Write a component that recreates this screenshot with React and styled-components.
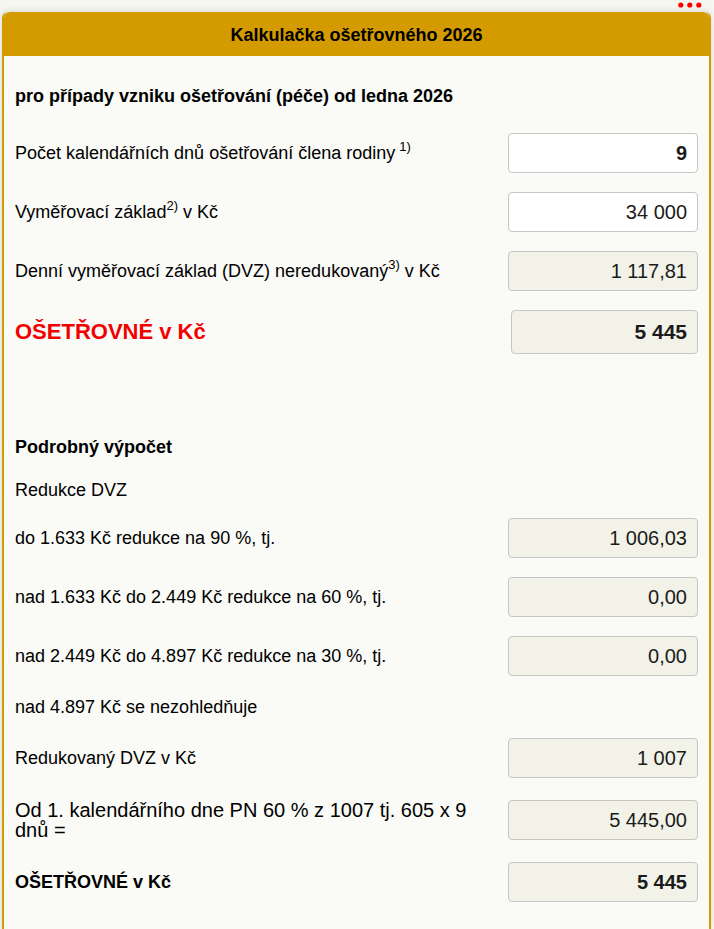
import React from 'react';
import styled, {createGlobalStyle} from 'styled-components';

const GlobalStyle = createGlobalStyle`
  html, body {
    margin: 0;
    padding: 0;
    background: #f7f7f2;
  }
  body {
    font-family: "Liberation Sans", Arial, sans-serif;
    color: #000;
  }
`;

const Page = styled.div`
  padding: 0 3px 0 2px;
`;

const TopBar = styled.div`
  display: flex;
  justify-content: flex-end;
  align-items: flex-start;
  height: 12px;
  padding: 2px 9px 0 0;
  box-sizing: border-box;
`;

const Panel = styled.div`
  border-radius: 6px 6px 0 0;
  box-shadow: 0 -1px 6px rgba(0, 0, 0, 0.12);
  background: #fafaf6;
  border-left: 2px solid #d49b00;
  border-right: 2px solid #d49b00;
  min-height: 917px;
`;

const Header = styled.div`
  height: 44px;
  background: #d49b00;
  border-radius: 6px 6px 0 0;
  display: flex;
  align-items: center;
  justify-content: center;
  font-size: 18px;
  font-weight: bold;
  padding-top: 2px;
  box-sizing: border-box;
`;

const Body = styled.div`
  padding: 28px 11px 20px 11px;
  display: flex;
  flex-direction: column;
`;

const Section = styled.div`
  display: flex;
  flex-direction: column;
  gap: ${({gap}) => gap || 19}px;
  margin-top: ${({top}) => top || 0}px;
`;

const Note = styled.div`
  height: 24px;
  line-height: 24px;
  font-size: 18px;
  font-weight: ${({bold}) => (bold ? 'bold' : 'normal')};
  margin-bottom: ${({after}) => after || 0}px;
  white-space: nowrap;
`;

const Row = styled.div`
  display: flex;
  align-items: center;
  justify-content: space-between;
  min-height: ${({h}) => h || 40}px;
`;

const Label = styled.div`
  flex: 1;
  padding-right: 20px;
  font-size: ${({size}) => size || 18}px;
  line-height: ${({lh}) => lh || 'normal'};
  font-weight: ${({bold}) => (bold ? 'bold' : 'normal')};
  color: ${({red}) => (red ? '#f20000' : '#000')};
`;

const Sup = styled.sup`
  font-size: 13px;
  vertical-align: 8px;
  line-height: 0;
  margin-left: ${({gap}) => (gap ? 4 : 0)}px;
`;

const Field = styled.input`
  box-sizing: border-box;
  width: ${({big}) => (big ? 187 : 190)}px;
  height: ${({big}) => (big ? 44 : 40)}px;
  border: 1px solid #c6c6c6;
  border-radius: 4px;
  background: ${({plain}) => (plain ? '#ffffff' : '#f2f2e8')};
  text-align: right;
  padding: 0 10px 0 6px;
  font-family: "Liberation Sans", Arial, sans-serif;
  font-size: ${({big}) => (big ? 21 : 20)}px;
  font-weight: ${({bold}) => (bold ? 'bold' : 'normal')};
  color: #1b1b1b;
  outline: none;
`;

const Dots = () => (
  <svg width="24" height="6" viewBox="0 0 24 6">
    <circle cx="2.8" cy="3" r="2.6" fill="#f00" />
    <circle cx="11.8" cy="3" r="2.6" fill="#f00" />
    <circle cx="20.8" cy="3" r="2.6" fill="#f00" />
  </svg>
);

function App() {
  return (
    <Page>
      <GlobalStyle />
      <TopBar>
        <Dots />
      </TopBar>
      <Panel>
        <Header>Kalkulačka ošetřovného 2026</Header>
        <Body>
          <Note bold after={25}>
            pro případy vzniku ošetřování (péče) od ledna 2026
          </Note>
          <Section gap={19}>
            <Row>
              <Label>
                Počet kalendářních dnů ošetřování člena rodiny
                <Sup gap>1)</Sup>
              </Label>
              <Field plain bold readOnly value="9" />
            </Row>
            <Row>
              <Label>
                Vyměřovací základ<Sup>2)</Sup> v Kč
              </Label>
              <Field plain readOnly value="34 000" />
            </Row>
            <Row>
              <Label>
                Denní vyměřovací základ (DVZ) neredukovaný<Sup>3)</Sup> v Kč
              </Label>
              <Field readOnly value="1 117,81" />
            </Row>
            <Row h={44}>
              <Label size={22} bold red>
                OŠETŘOVNÉ v Kč
              </Label>
              <Field big bold readOnly value="5 445" />
            </Row>
          </Section>
          <Section gap={19} top={81}>
            <Note bold>Podrobný výpočet</Note>
            <Note after={-3}>Redukce DVZ</Note>
            <Row>
              <Label>do 1.633 Kč redukce na 90 %, tj.</Label>
              <Field readOnly value="1 006,03" />
            </Row>
            <Row>
              <Label>nad 1.633 Kč do 2.449 Kč redukce na 60 %, tj.</Label>
              <Field readOnly value="0,00" />
            </Row>
            <Row>
              <Label>nad 2.449 Kč do 4.897 Kč redukce na 30 %, tj.</Label>
              <Field readOnly value="0,00" />
            </Row>
            <Note>nad 4.897 Kč se nezohledňuje</Note>
            <Row>
              <Label>Redukovaný DVZ v Kč</Label>
              <Field readOnly value="1 007" />
            </Row>
            <Row h={46}>
              <Label size={20} lh="20px">
                Od 1. kalendářního dne PN 60 % z 1007 tj. 605 x 9 dnů =
              </Label>
              <Field readOnly value="5 445,00" />
            </Row>
            <Row>
              <Label bold>OŠETŘOVNÉ v Kč</Label>
              <Field bold readOnly value="5 445" />
            </Row>
          </Section>
        </Body>
      </Panel>
    </Page>
  );
}

export default App;
